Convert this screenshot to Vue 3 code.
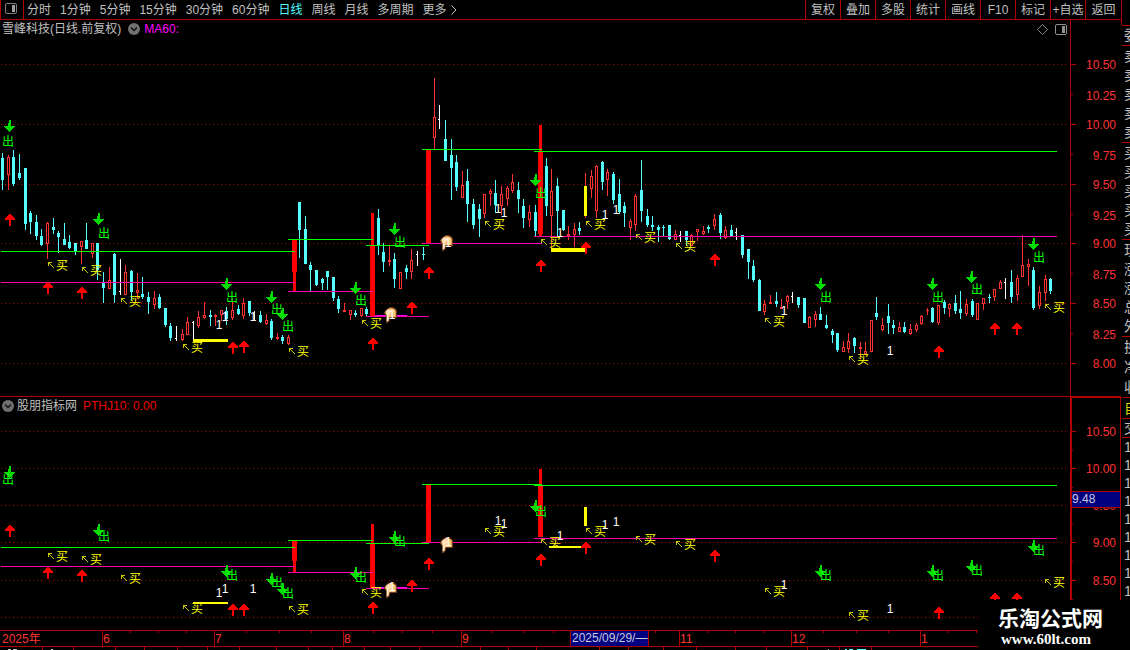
<script setup>
const periods = ['分时', '1分钟', '5分钟', '15分钟', '30分钟', '60分钟', '日线', '周线', '月线', '多周期', '更多']
const tools = ['复权', '叠加', '多股', '统计', '画线', 'F10', '标记', '+自选', '返回']

// One token per trading day: kind, wick top, wick bottom, body top, body bottom.
const series = `
c153,190,158,180 r155,190,157,175 c150,186,157,184 c154,180,173,178 c168,230,168,224 c211,234,213,222
c215,240,222,236 c229,246,236,245 r222,259,223,244 c218,234,227,230 c231,253,233,237 c223,245,239,245
c235,249,242,248 c243,255,243,251 r241,264,241,247 c223,249,240,249 r243,258,243,254 c243,280,243,270
c272,303,283,288 r267,289,280,289 c253,303,254,295 w259,295,291 r265,295,272,295 c270,301,271,292
r273,299,290,293 c277,299,294,297 c292,314,297,302 r291,309,298,305 c294,309,297,308 c308,327,308,325
c323,341,326,338 w326,341,338 r329,341,334,340 r317,335,322,335 w321,340,322 r311,328,317,326
r302,319,315,318 c310,326,315,317 r314,326,315,317 r310,321,310,315 c307,325,311,319 r298,320,310,318
c305,315,309,314 r298,319,303,316 c301,316,301,313 w311,321,313 c311,323,315,322 r314,325,320,324
c319,340,321,338 r333,340,337,339 c335,344,337,341 r335,345,337,344 x c202,258,202,230
c216,264,229,264 c262,291,265,270 c270,286,270,285 c278,290,279,283 c271,290,271,277 c277,301,277,298
c296,313,299,309 r303,312,310,312 r310,320,310,315 c310,317,313,315 r308,317,308,316 c307,317,309,314
x c209,255,218,245 c243,272,252,262 r245,266,260,262 c253,288,259,279 r272,289,272,289
c265,279,268,272 r249,279,260,272 w251,266,254 c247,260,254,255 x r78,149,117,138 w105,129,119
c120,161,139,161 c139,200,155,168 c155,191,162,187 r171,198,185,198 c169,222,181,204 c199,229,204,225
c204,237,209,219 r194,218,194,214 r189,206,191,194 c180,213,193,205 r186,215,194,206 r186,206,188,199
r174,193,182,191 c182,213,190,199 c199,228,206,218 r205,227,212,220 c205,236,212,231 x
c158,216,166,206 r169,250,191,216 c178,236,186,211 c210,231,210,230 r226,240,234,236 r223,247,229,235
c222,235,228,231 r173,218,186,216 r170,198,176,189 r165,218,166,211 c161,190,162,182 r169,196,172,180
c172,204,174,200 c179,214,194,212 c202,227,206,213 r219,240,221,228 r194,231,196,225 c160,222,190,211
c209,227,216,225 c216,231,225,227 c225,242,227,230 c225,236,227,228 c225,240,225,239 r230,240,234,240
w231,242,235 c231,246,231,240 r234,246,235,246 r229,241,229,232 r226,235,231,234 c225,233,227,229
r214,230,219,226 c213,239,215,233 r226,239,230,238 c225,236,230,236 w228,240,232 c235,258,235,255
c249,279,249,262 c260,282,266,280 c279,311,280,311 r300,315,304,312 r295,304,302,304 c292,307,301,304
r299,309,307,309 r295,309,296,302 w292,303,296 c297,308,297,305 c298,323,298,323 r316,328,317,328
r311,327,314,320 c307,320,314,320 c315,329,325,328 c329,343,331,335 c333,352,333,350 r341,352,347,352
r333,353,341,349 c337,353,338,346 r342,359,347,349 r342,354,351,354 r320,352,320,352 c297,320,313,317
r318,331,325,330 c304,334,316,323 c320,334,325,328 r322,332,327,332 c322,333,327,332 r324,335,329,334
r323,332,325,330 r315,325,316,324 r308,315,310,311 c307,323,308,322 r305,325,305,323 c300,314,302,308
r303,317,304,309 c295,314,303,311 c291,319,309,313 r299,316,304,314 c299,317,301,315 r303,320,303,320
r298,310,298,304 c294,303,297,298 r289,301,289,297 r280,289,282,289 w278,299,282 c270,303,282,297
r275,301,278,295 r235,277,265,277 r259,286,264,267 c267,310,270,308 r286,309,292,306 r275,301,279,293
c278,294,279,291`

const candles = series.trim().split(/\s+/).map((token, i) => {
  const [top, bottom, open, close] = token.slice(1).split(',').map(Number)
  return { kind: token[0], x: Math.round(2.2 + 5.604 * i), top, bottom, open, close }
}).filter((d) => d.kind !== 'x')

const buyX = [48, 82, 121, 183, 289, 362, 485, 541, 586, 636, 676, 765, 849, 1045]
const upX = [10, 48, 82, 233, 244, 373, 412, 429, 541, 586, 715, 939, 995, 1017]
const downX = [10, 99, 227, 272, 283, 356, 395, 536, 821, 933, 972, 1034]
const outX = [2, 98, 226, 271, 282, 355, 394, 535, 820, 932, 971, 1033]
const oneX = [219, 225, 253, 498, 504, 560, 605, 616, 448, 392, 784, 890]
const zip = (xs, ys) => xs.map((x, i) => ({ x, y: ys[i] }))
const spans = [[1, 295], [288, 373], [366, 429], [422, 542], [534, 1057]]
const levels = (ys) => spans.map(([x1, x2], i) => ({ x: x1, w: x2 - x1, y: ys[i] }))

const panes = [
  {
    id: 'price', top: 20, height: 377, candles,
    grid: [64, 124, 184, 243, 303, 363],
    minor: [94, 154, 214, 273, 333],
    labels: [[64, '10.50'], [95, '10.25'], [124, '10.00'], [155, '9.75'], [184, '9.50'], [215, '9.25'], [243, '9.00'], [274, '8.75'], [303, '8.50'], [334, '8.25'], [363, '8.00']],
    green: levels([251, 239, 245, 149, 151]),
    pink: levels([282, 291, 316, 243, 236]),
    extra: 315,
    bars: [[292, 240, 5, 32], [293, 272, 3, 19], [371, 213, 3, 32], [370, 245, 5, 71], [426, 150, 5, 93], [539, 125, 3, 27], [538, 152, 5, 82], [539, 234, 3, 2]],
    yellow: [[193, 339, 35, 3], [551, 248, 34, 4], [584, 186, 3, 30]],
    buys: zip(buyX, [260, 265, 296, 342, 346, 318, 219, 237, 219, 232, 241, 316, 354, 302]),
    ups: zip(upX, [214, 282, 287, 342, 341, 338, 302, 267, 260, 242, 254, 346, 323, 323]),
    downs: zip(downX, [120, 213, 278, 291, 308, 282, 223, 174, 278, 278, 271, 238]),
    outs: zip(outX, [147, 239, 303, 315, 332, 306, 248, 199, 303, 303, 295, 263]),
    hands: [[440, 235], [384, 307]],
    ones: zip(oneX, [329, 321, 321, 213, 217, 237, 219, 214, 247, 319, 315, 355]),
  },
  {
    id: 'signal', top: 397, height: 233, candles: [],
    grid: [431, 468, 505, 542, 580, 617],
    minor: [450, 487, 524, 561, 599],
    labels: [[431, '10.50'], [468, '10.00'], [505, '9.50'], [542, '9.00'], [580, '8.50']],
    green: levels([547, 540, 543, 484, 485]),
    pink: levels([566, 572, 588, 542, 538]),
    extra: 587,
    bars: [[292, 541, 5, 20], [293, 561, 3, 11], [371, 524, 3, 19], [370, 543, 5, 45], [426, 485, 5, 57], [539, 469, 3, 17], [538, 486, 5, 51]],
    yellow: [[193, 602, 35, 2], [549, 546, 33, 2], [584, 507, 3, 19]],
    buys: zip(buyX, [551, 554, 573, 603, 604, 587, 526, 537, 526, 534, 539, 586, 610, 577]),
    ups: zip(upX, [525, 567, 570, 604, 604, 602, 580, 558, 554, 542, 550, 607, 593, 593]),
    downs: zip(downX, [466, 524, 565, 573, 583, 567, 531, 500, 565, 565, 560, 540]),
    outs: zip(outX, [485, 542, 581, 588, 599, 583, 547, 517, 581, 581, 576, 556]),
    hands: [[440, 537], [384, 582]],
    ones: zip(oneX, [597, 593, 593, 525, 528, 540, 529, 526, 546, 591, 589, 613]),
  },
]

const months = [[102, '6'], [214, '7'], [343, '8'], [461, '9'], [679, '11'], [791, '12'], [920, '1']]
const weekTicks = [130, 158, 186, 246, 279, 311, 373, 402, 432, 492, 523, 553, 655, 707, 735, 763, 823, 856, 888, 948, 976]
const footTicks = [42, 73, 115, 144, 177, 207, 239, 276, 308, 332, 364, 390, 419, 480, 508, 536, 599, 628, 663, 696, 735, 766, 807, 839, 871]

const quoteGroups = [
  { size: 'mid', rows: ['委'] },
  { size: 'mid pad', rows: ['卖', '卖', '卖', '卖', '卖'] },
  { size: 'mid pad', rows: ['买', '买', '买', '买', '买'] },
  { size: 'mid pad', rows: ['现', '涨', '涨', '总', '外'] },
  { size: 'tall', rows: ['换', '净', '收'] },
  { size: 'tall gold', rows: ['自'] },
  { size: 'short', rows: ['交'] },
  { size: 'short plain', rows: ['1', '1', '1', '1', '1', '1', '1', '1', '1'] },
]
</script>

<template>
  <div class="terminal">
    <main class="board">
      <header class="toolbar">
        <button class="panel-toggle" type="button" aria-label="侧栏">
          <svg width="12" height="11" viewBox="0 0 12 11"><rect x=".5" y=".5" width="11" height="10" rx="1.5" fill="none" stroke="#808080" /><rect x="7" y="2" width="3" height="7" fill="#a0a0a0" /></svg>
        </button>
        <nav class="periods">
          <button v-for="p in periods" :key="p" type="button" :class="{ active: p === '日线' }">{{ p }}<svg v-if="p === '更多'" class="more" width="6" height="10" viewBox="0 0 6 10"><path d="M.5 .5L5 5L.5 9.5" fill="none" stroke="#c0c0c0" /></svg></button>
        </nav>
        <nav class="tools">
          <button v-for="t in tools" :key="t" type="button">{{ t }}</button>
        </nav>
      </header>

      <section v-for="pane in panes" :key="pane.id" class="pane">
        <svg class="chart" :viewBox="`0 ${pane.top} 1121 ${pane.height}`" shape-rendering="crispEdges">
          <line v-for="y in pane.grid" :key="'g' + y" class="grid-line" x1="1" x2="1067" :y1="y + 0.5" :y2="y + 0.5" />

          <g v-for="d in pane.candles" :key="d.x" :class="'k-' + d.kind">
            <rect :x="d.x" :y="d.top" width="1" :height="d.bottom - d.top" />
            <rect v-if="d.kind === 'w'" :x="d.x - 1" :y="d.open" width="1" height="1" />
            <rect v-else :x="d.x - 1" :y="d.open" width="3" :height="d.close - d.open" />
            <rect v-if="d.kind === 'r' && d.close - d.open > 2" class="hollow" :x="d.x" :y="d.open + 1" width="1" :height="d.close - d.open - 2" />
          </g>

          <rect v-for="(b, i) in pane.bars" :key="'b' + i" fill="#f00" :x="b[0]" :y="b[1]" :width="b[2]" :height="b[3]" />
          <rect v-for="(l, i) in pane.green" :key="'n' + i" fill="#0f0" :x="l.x" :y="l.y" :width="l.w" height="1" />
          <rect v-for="(l, i) in pane.pink" :key="'p' + i" fill="#ff00a8" :x="l.x" :y="l.y" :width="l.w" height="1" />
          <rect fill="#f0f" x="375" :y="pane.extra" width="32" height="1" />
          <rect v-for="(b, i) in pane.yellow" :key="'y' + i" fill="#ff0" :x="b[0]" :y="b[1]" :width="b[2]" :height="b[3]" />

          <path v-for="(m, i) in pane.ups" :key="'u' + i" fill="#f00" :d="`M${m.x - 1} ${m.y}h2v1h1v1h1v1h1v1h1v2h-4v6h-2v-6h-4v-2h1v-1h1v-1h1v-1h1z`" />
          <path v-for="(m, i) in pane.downs" :key="'d' + i" fill="#00dc00" :d="`M${m.x - 1} ${m.y}h2v6h4v1h-1v1h-1v1h-1v1h-1v1h-1v1h-1v-1h-1v-1h-1v-1h-1v-1h-1v-1h-1v-1h4z`" />
          <text v-for="(m, i) in pane.outs" :key="'o' + i" class="out" :x="m.x" :y="m.y - 1">出</text>

          <g v-for="(m, i) in pane.buys" :key="'s' + i">
            <path fill="#c8c800" :d="`M${m.x} ${m.y + 2}h4v1h-2v1h1v1h1v1h1v1h1v1h-1v-1h-1v-1h-1v-1h-1v-1h-1v2h-1z`" />
            <text class="buy" :x="m.x + 8" :y="m.y + 10">买</text>
          </g>

          <g v-for="(h, i) in pane.hands" :key="'h' + i" :transform="`translate(${h[0]} ${h[1]})`" shape-rendering="auto">
            <path d="M2.5 15.5L2.5 9L.6 6Q2 2.5 5 1Q10 -.5 12.3 3.5V10.5H6L4.7 14.5Z" fill="#ffc878" stroke="#6e3c1e" stroke-width="1.2" />
            <path d="M3.5 14V7.5L6.5 4M1.8 5.5L5 2.5" fill="none" stroke="#fff0e0" stroke-width="1.5" />
          </g>
          <text v-for="(m, i) in pane.ones" :key="'1' + i" class="one" :x="m.x" :y="m.y">1</text>

          <rect class="rule" x="1070" :y="pane.top" width="1" :height="pane.height" />
          <rect v-for="y in pane.grid.slice(0, pane.labels.length)" :key="'t' + y" class="rule" x="1071" :y="y" width="5" height="1" />
          <rect v-for="y in pane.minor" :key="'m' + y" class="rule" x="1071" :y="y" width="2" height="1" />
          <text v-for="l in pane.labels" :key="l[1]" class="scale" x="1116" :y="l[0] + 5">{{ l[1] }}</text>

          <rect v-if="pane.id === 'price'" class="rule" x="0" y="396" width="1121" height="1" />
          <g v-else>
            <rect class="rule" x="1070" y="397" width="51" height="1" />
            <rect class="rule" x="1071" y="397" width="1" height="233" />
            <rect class="rule" x="1120" y="397" width="1" height="233" />
            <rect class="rule" x="1072" y="491" width="48" height="17" />
            <rect x="1072" y="492" width="48" height="15" fill="#000080" />
            <text class="cursor-price" x="1072" y="503">9.48</text>
          </g>
        </svg>

        <div v-if="pane.id === 'price'" class="caption">
          <span>雪峰科技(日线.前复权)</span>
          <svg class="knob" width="12" height="12" viewBox="0 0 12 12"><circle cx="6" cy="6" r="6" fill="#707070" /><path d="M3 4.5L6 7.5L9 4.5" fill="none" stroke="#111" stroke-width="1.5" /></svg>
          <span class="ma">MA60:</span>
          <svg class="corner" width="25" height="11" viewBox="0 0 25 11"><path d="M5.5 .5L10.5 5.5L5.5 10.5L.5 5.5Z" fill="none" stroke="#808080" /></svg>
          <svg width="12" height="11" viewBox="0 0 12 11"><rect x=".5" y=".5" width="11" height="10" rx="1.5" fill="none" stroke="#909090" /><rect x="7" y="2" width="3" height="7" fill="#909090" /></svg>
        </div>
        <div v-else class="caption">
          <svg width="12" height="12" viewBox="0 0 12 12"><circle cx="6" cy="6" r="6" fill="#707070" /><path d="M3 4.5L6 7.5L9 4.5" fill="none" stroke="#111" stroke-width="1.5" /></svg>
          <span class="name">股朋指标网</span>
          <span class="value">PTHJ10: 0.00</span>
        </div>
      </section>

      <svg class="chart" viewBox="0 630 1121 20" shape-rendering="crispEdges">
        <rect class="rule" x="0" y="630" width="1121" height="1" />
        <rect class="rule" x="0" y="646" width="1121" height="1" />
        <text class="month" x="2" y="643">2025年</text>
        <g v-for="m in months" :key="m[0]">
          <rect class="rule" :x="m[0]" y="631" width="1" height="15" />
          <text class="month" :x="m[0] + 1" y="643">{{ m[1] }}</text>
        </g>
        <rect v-for="x in weekTicks" :key="'w' + x" class="rule" :x="x" y="631" width="1" height="2" />
        <rect v-for="x in footTicks" :key="'f' + x" class="rule" :x="x" y="647" width="1" height="3" />
        <rect class="rule" x="570" y="631" width="79" height="15" />
        <rect x="571" y="631" width="77" height="15" fill="#000080" />
        <text class="cursor-date" x="572" y="642">2025/09/29/—</text>
        <path fill="#c0c0c0" d="M8 649h3v1h-3zM13 649h4v1h-4zM51 649h2v1h-2zM828 649h1v1h-1z" />
        <path fill="#54ffff" d="M845 649h2v1h-2zM849 649h4v1h-4zM857 649h9v1h-9z" />
      </svg>
    </main>

    <aside class="quotes">
      <ul v-for="(g, i) in quoteGroups" :key="i" :class="g.size">
        <li v-for="(r, j) in g.rows" :key="j">{{ r }}</li>
      </ul>
    </aside>

    <div class="brand">
      <strong>乐淘公式网</strong>
      <a href="#">www.60lt.com</a>
    </div>
  </div>
</template>

<style>
body {
  background: #000;
  overflow: hidden;
}
</style>

<style scoped>
.terminal {
  position: relative;
  display: flex;
  background: #000;
  color: #c0c0c0;
  font: 12px/18px "Liberation Sans", "Noto Sans CJK SC", sans-serif;
  overflow: hidden;
}
.board {
  flex: 1;
  min-width: 0;
}
button {
  margin: 0;
  padding: 0;
  border: 0;
  background: none;
  color: inherit;
  font: inherit;
  white-space: nowrap;
}
.toolbar {
  display: flex;
  height: 19px;
  border-bottom: 1px solid #b00000;
}
.panel-toggle {
  display: flex;
  width: 24px;
  padding: 3px 0 0 4px;
  border-left: 1px solid #b00000;
  border-right: 1px solid #b00000;
}
.periods {
  display: flex;
  gap: 9px;
  padding-left: 3px;
}
.active {
  color: #54ffff;
}
.more {
  margin-left: 4px;
  vertical-align: -1px;
}
.tools {
  display: flex;
  margin-left: auto;
}
.tools button {
  width: 35px;
  border-left: 1px solid #b00000;
}
.tools button:last-child {
  width: 36px;
}
.pane {
  display: grid;
}
.pane > * {
  grid-area: 1 / 1;
}
.chart {
  display: block;
  width: 100%;
}
.caption {
  display: flex;
  align-items: center;
  align-self: start;
  height: 18px;
  padding: 0 54px 0 2px;
}
.knob {
  margin: 0 4px 0 7px;
}
.ma {
  color: #f0f;
}
.corner {
  margin-left: auto;
  margin-right: -7px;
}
.name {
  margin: 0 6px 0 3px;
}
.value {
  color: #f00000;
}
.grid-line {
  stroke: #b00000;
  stroke-dasharray: 1 3;
}
.rule {
  fill: #b00000;
}
.k-c {
  fill: #54ffff;
}
.k-r {
  fill: #ff3232;
}
.k-w {
  fill: #fff;
}
.hollow {
  fill: #000;
}
.out {
  fill: #0f0;
}
.buy {
  fill: #ff0;
}
.one {
  fill: #fff;
  text-anchor: middle;
}
.scale {
  fill: #ff3232;
  text-anchor: end;
}
.month {
  fill: #ff3232;
}
.cursor-price,
.cursor-date {
  fill: #c8c8dc;
}
.quotes {
  width: 8px;
  height: 0;
  min-height: 100%;
  padding-top: 25px;
  border-left: 1px solid #b00000;
  font-size: 14px;
}
ul {
  margin: 0;
  padding: 0 0 0 2px;
  border-top: 1px solid #b00000;
  list-style: none;
  overflow: hidden;
}
li {
  width: 16px;
}
.pad {
  padding-top: 1px;
}
.mid li {
  height: 19px;
  line-height: 19px;
}
.tall li {
  height: 20px;
  line-height: 20px;
}
.short li {
  height: 18px;
  line-height: 18px;
}
.gold {
  color: #d8d800;
}
.brand {
  position: absolute;
  right: 0;
  bottom: 0;
  display: flex;
  flex-direction: column;
  box-sizing: border-box;
  width: 152px;
  height: 50px;
  padding: 8px 0 0 20px;
  background: #000;
  color: #fff;
}
.brand strong {
  font-size: 21px;
  line-height: 22px;
}
.brand a {
  padding-left: 3px;
  color: #fff;
  font: bold 15px/18px "Liberation Serif", serif;
  text-decoration: none;
}
</style>
